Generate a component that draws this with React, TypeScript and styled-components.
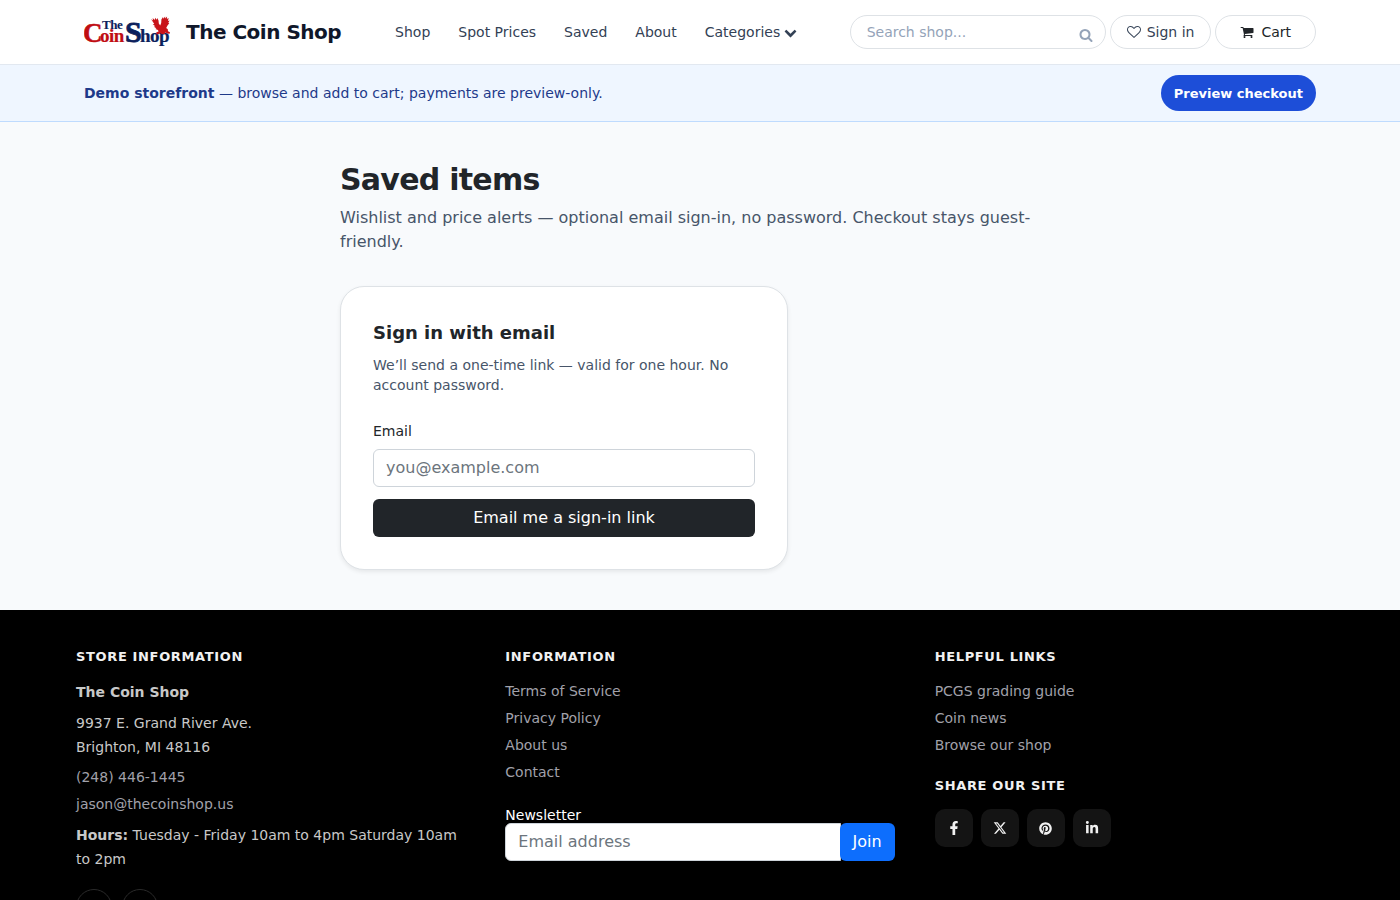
import React from 'react';
import styled, { createGlobalStyle } from 'styled-components';
import { FaFacebookF, FaLinkedinIn, FaPinterest } from 'react-icons/fa';
import { FaXTwitter } from 'react-icons/fa6';

const Global = createGlobalStyle`
  *, *::before, *::after { box-sizing: border-box; }
  body {
    margin: 0;
    background: #f8fafc;
    color: #212529;
    font-family: "DejaVu Sans", sans-serif;
    font-size: 16px;
    line-height: 24px;
  }
  h1, h2, h3, p, ul { margin: 0; padding: 0; }
  ul { list-style: none; }
  a { color: inherit; text-decoration: none; }
  input, button { font-family: inherit; margin: 0; }
`;

const ICONS = {
  search: 'M1216 832q0-185-131.5-316.5t-316.5-131.5-316.5 131.5-131.5 316.5 131.5 316.5 316.5 131.5 316.5-131.5 131.5-316.5zm512 832q0 52-38 90t-90 38q-54 0-90-38l-343-342q-179 124-399 124-143 0-273.5-55.5t-225-150-150-225-55.5-273.5 55.5-273.5 150-225 225-150 273.5-55.5 273.5 55.5 225 150 150 225 55.5 273.5q0 220-124 399l343 343q37 37 37 90z',
  cart: 'M704 1536q0 52-38 90t-90 38-90-38-38-90 38-90 90-38 90 38 38 90zm896 0q0 52-38 90t-90 38-90-38-38-90 38-90 90-38 90 38 38 90zm128-1088v512q0 24-16.5 42.5t-40.5 21.5l-1044 122q13 60 13 70 0 16-24 64h920q26 0 45 19t19 45-19 45-45 19h-1024q-26 0-45-19t-19-45q0-11 8-31.5t16-36 21.5-40 15.5-29.5l-177-823h-204q-26 0-45-19t-19-45 19-45 45-19h256q16 0 28.5 6.5t19.5 15.5 13 24.5 8 26 5.5 29.5 4.5 26h1201q26 0 45 19t19 45z',
  heart: 'M1664 596q0-81-21.5-143t-55-98.5-81.5-59.5-94-31-98-8-112 25.5-110.5 64-86.5 72-60 61.5q-18 22-49 22t-49-22q-24-28-60-61.5t-86.5-72-110.5-64-112-25.5-98 8-94 31-81.5 59.5-55 98.5-21.5 143q0 168 187 355l581 560 580-559q188-188 188-356zm128 0q0 221-229 450l-623 600q-18 18-44 18t-44-18l-624-602q-10-8-27.5-26t-55.5-65.5-68-97.5-53.5-121-23.5-138q0-220 127-344t351-124q62 0 126.5 21.5t120 58 95.5 68.5 76 68q36-36 76-68t95.5-68.5 120-58 126.5-21.5q224 0 351 124t127 344z',
  chevron: 'M1683 808l-742 741q-19 19-45 19t-45-19l-742-741q-19-19-19-45.5t19-45.5l166-165q19-19 45-19t45 19l531 531 531-531q19-19 45-19t45 19l166 165q19 19 19 45.5t-19 45.5z',
};

function Icon({ name, size = 14 }: { name: keyof typeof ICONS; size?: number }) {
  return (
    <svg width={size} height={size} viewBox="0 0 1792 1792" fill="currentColor" aria-hidden="true">
      <path d={ICONS[name]} />
    </svg>
  );
}

function Logo() {
  return (
    <svg width="88" height="36" viewBox="0 0 88 36" fontFamily="'Liberation Serif', serif" aria-hidden="true">
      <g fill="#c00d12" stroke="#c00d12" strokeWidth="0.2">
        <text x="-1" y="28" fontSize="27" strokeWidth="0.5">C</text>
        <text x="16" y="28" fontSize="19">oin</text>
      </g>
      <g fill="#0c1f5c" stroke="#0c1f5c" strokeWidth="0.1">
        <text x="18" y="15" fontSize="13">The</text>
        <text x="41" y="28" fontSize="30" strokeWidth="0.8">S</text>
        <text x="56" y="28" fontSize="19" strokeWidth="0.2">hop</text>
      </g>
      <path
        fill="#c8141a"
        d="M67 5l2 1.500-.3-2.500 2 2 .5-2.300 1.400 2 .7-1.700 1.200 2.500.3 3 1.400 2 1-2.500.2-3.500 1.600-2.500.4 1.800 1.700-2.300.2 2 1.800-2-.2 2.600 1.800-1-.8 2.800 1.600-.4-1.200 2.400 1 .3-1.800 2.400-1.300 2.500 1.600 1.200.2 2 2 1-.4 1.500-2.600-.2-1.400-1-1.600 1.600-2.400-.2-1.800-1-1.400 1.200-2.200.3.600-1-1.200-.4 1.600-1.200 1.400-.4-.6-1.400-2.600-1.200 1-.7-2.600-1.500 1.500-.4-2.600-2 1.600-.2z"
      />
    </svg>
  );
}

const Header = styled.header`
  background: #fff;
  border-bottom: 1px solid #e2e8f0;
`;
const Container = styled.div`
  max-width: 1280px;
  margin: 0 auto;
  padding: 0 24px;
  display: flex;
  align-items: center;
`;
const HeaderRow = styled(Container)`
  height: 64px;
`;
const Brand = styled.a`
  display: flex;
  align-items: center;
  gap: 14px;
  font-size: 20px;
  font-weight: 700;
  line-height: 28px;
  letter-spacing: -0.5px;
  color: #0f172a;
  white-space: nowrap;
`;
const Nav = styled.nav`
  display: flex;
  align-items: center;
  gap: 28px;
  margin-left: 54px;
  font-size: 14px;
  line-height: 20px;
  color: #334155;
  white-space: nowrap;
`;
const MenuButton = styled.button`
  display: flex;
  align-items: center;
  gap: 4px;
  padding: 0;
  border: 0;
  background: none;
  color: inherit;
  font-size: 14px;
  line-height: 20px;
`;
const Actions = styled.div`
  display: flex;
  align-items: center;
  gap: 4px;
  margin-left: auto;
`;
const SearchBox = styled.form`
  display: flex;
  align-items: center;
  width: 256px;
  height: 34px;
  padding: 0 12px 0 16px;
  border: 1px solid #dee2e6;
  border-radius: 17px;
`;
const SearchInput = styled.input`
  flex: 1;
  min-width: 0;
  padding: 0;
  border: 0;
  outline: 0;
  background: none;
  font-size: 14px;
  line-height: 20px;
  color: #334155;
  &::placeholder { color: #94a3b8; opacity: 1; }
`;
const SearchButton = styled.button`
  display: flex;
  padding: 6px 0 0;
  border: 0;
  background: none;
  color: #94a3b8;
`;
const Pill = styled.a<{ $wide?: boolean }>`
  display: flex;
  align-items: center;
  gap: ${(p) => (p.$wide ? 7 : 6)}px;
  height: 34px;
  padding: 0 ${(p) => (p.$wide ? 24 : 16)}px;
  border: 1px solid #dee2e6;
  border-radius: 17px;
  font-size: 14px;
  line-height: 20px;
  white-space: nowrap;
  color: ${(p) => (p.$wide ? '#212529' : '#334155')};
`;

const Banner = styled.div`
  background: #eff6ff;
  border-bottom: 1px solid #bfdbfe;
`;
const BannerRow = styled(Container)`
  justify-content: space-between;
  padding-top: 10px;
  padding-bottom: 10px;
  font-size: 14px;
  line-height: 20px;
  color: #1e3a8a;
`;
const PreviewButton = styled.button`
  height: 36px;
  padding: 0 13px;
  border: 0;
  border-radius: 18px;
  background: #1d4ed8;
  color: #fff;
  font-size: 13px;
  font-weight: 700;
  white-space: nowrap;
`;

const Main = styled.main`
  max-width: 768px;
  margin: 0 auto;
  padding: 40px 24px;
`;
const Title = styled.h1`
  font-size: 30px;
  line-height: 36px;
  font-weight: 700;
  letter-spacing: -0.75px;
`;
const Lead = styled.p`
  margin-top: 8px;
  color: #475569;
`;
const Card = styled.section`
  max-width: 448px;
  margin-top: 32px;
  padding: 32px;
  background: #fff;
  border: 1px solid #dee2e6;
  border-radius: 24px;
  box-shadow: 0 2px 4px rgba(0, 0, 0, 0.075);
`;
const CardTitle = styled.h2`
  font-size: 18px;
  line-height: 28px;
  font-weight: 700;
`;
const CardText = styled.p`
  margin-top: 8px;
  font-size: 14px;
  line-height: 20px;
  color: #475569;
`;
const Form = styled.form`
  display: flex;
  flex-direction: column;
  margin-top: 24px;
`;
const Label = styled.label`
  margin-bottom: 6px;
  font-size: 14px;
  line-height: 24px;
`;
const TextInput = styled.input`
  height: 38px;
  min-width: 0;
  padding: 5px 12px 7px;
  border: 1px solid #ced4da;
  border-radius: 6px;
  background: #fff;
  font-size: 16px;
  line-height: 24px;
  color: #212529;
  &::placeholder { color: #6c757d; opacity: 1; }
`;
const SolidButton = styled.button<{ $primary?: boolean }>`
  height: 38px;
  padding: 0 13px 2px;
  border: 0;
  border-radius: 6px;
  background: ${(p) => (p.$primary ? '#0d6efd' : '#212529')};
  color: #fff;
  font-size: 16px;
`;
const SubmitButton = styled(SolidButton)`
  margin-top: 12px;
`;

const Footer = styled.footer`
  background: #000;
  color: #c8c8c8;
  font-size: 14px;
  line-height: 24px;
`;
const FooterGrid = styled.div`
  display: grid;
  grid-template-columns: repeat(3, minmax(0, 1fr));
  gap: 40px;
  max-width: 1280px;
  margin: 0 auto;
  padding: 36px 16px;
`;
const FooterHeading = styled.h3`
  margin-bottom: 12px;
  font-size: 13px;
  line-height: 22px;
  font-weight: 700;
  letter-spacing: 0.05em;
  text-transform: uppercase;
  color: #f1f1f1;
`;
const StoreLine = styled.p`
  margin-bottom: 7px;
`;
const LinkList = styled.ul`
  display: flex;
  flex-direction: column;
  gap: 4px;
  margin-bottom: 18px;
  line-height: 23px;
  color: #a1a1aa;
`;
const ContactList = styled(LinkList)`
  margin-bottom: 7px;
`;
const NewsletterLabel = styled.label`
  display: block;
  margin-top: 23px;
  font-size: 14px;
  line-height: 16px;
  color: #fff;
`;
const InputGroup = styled.form`
  display: flex;
`;
const NewsletterInput = styled(TextInput)`
  flex: 1;
  border-top-right-radius: 0;
  border-bottom-right-radius: 0;
`;
const JoinButton = styled(SolidButton)`
  margin-left: -1px;
`;
const ShareRow = styled.div`
  display: flex;
  gap: 8px;
`;
const ShareLink = styled.a`
  display: flex;
  align-items: center;
  justify-content: center;
  width: 38px;
  height: 38px;
  border-radius: 10px;
  background: #141414;
  color: #f1f1f1;
`;
const SocialRow = styled.div`
  display: flex;
  gap: 10px;
  margin-top: 18px;
`;
const SocialLink = styled.a`
  display: flex;
  align-items: center;
  justify-content: center;
  width: 36px;
  height: 36px;
  border: 1px solid #2a2a2a;
  border-radius: 50%;
`;

const NAV_LINKS = ['Shop', 'Spot Prices', 'Saved', 'About'];
const INFO_LINKS = ['Terms of Service', 'Privacy Policy', 'About us', 'Contact'];
const HELPFUL_LINKS = ['PCGS grading guide', 'Coin news', 'Browse our shop'];

export default function App() {
  return (
    <>
      <Global />
      <Header>
        <HeaderRow>
          <Brand href="#">
            <Logo />
            The Coin Shop
          </Brand>
          <Nav>
            {NAV_LINKS.map((label) => (
              <a key={label} href="#">{label}</a>
            ))}
            <MenuButton type="button">
              Categories
              <Icon name="chevron" size={13} />
            </MenuButton>
          </Nav>
          <Actions>
            <SearchBox>
              <SearchInput type="text" placeholder="Search shop..." aria-label="Search shop" />
              <SearchButton type="button" aria-label="Search">
                <Icon name="search" />
              </SearchButton>
            </SearchBox>
            <Pill href="#">
              <Icon name="heart" />
              Sign in
            </Pill>
            <Pill href="#" $wide>
              <Icon name="cart" />
              Cart
            </Pill>
          </Actions>
        </HeaderRow>
      </Header>
      <Banner>
        <BannerRow>
          <p>
            <strong>Demo storefront</strong> — browse and add to cart; payments are preview-only.
          </p>
          <PreviewButton type="button">Preview checkout</PreviewButton>
        </BannerRow>
      </Banner>
      <Main>
        <Title>Saved items</Title>
        <Lead>Wishlist and price alerts — optional email sign-in, no password. Checkout stays guest-friendly.</Lead>
        <Card>
          <CardTitle>Sign in with email</CardTitle>
          <CardText>We’ll send a one-time link — valid for one hour. No account password.</CardText>
          <Form>
            <Label htmlFor="email">Email</Label>
            <TextInput id="email" type="email" placeholder="you@example.com" />
            <SubmitButton type="button">Email me a sign-in link</SubmitButton>
          </Form>
        </Card>
      </Main>
      <Footer>
        <FooterGrid>
          <section>
            <FooterHeading>Store information</FooterHeading>
            <StoreLine><strong>The Coin Shop</strong></StoreLine>
            <StoreLine>9937 E. Grand River Ave.<br />Brighton, MI 48116</StoreLine>
            <ContactList>
              <li><a href="#">(248) 446-1445</a></li>
              <li><a href="#">jason@thecoinshop.us</a></li>
            </ContactList>
            <p><strong>Hours:</strong> Tuesday - Friday 10am to 4pm Saturday 10am to 2pm</p>
            <SocialRow>
              <SocialLink href="#" aria-label="Facebook"><FaFacebookF size={14} /></SocialLink>
              <SocialLink href="#" aria-label="LinkedIn"><FaLinkedinIn size={14} /></SocialLink>
            </SocialRow>
          </section>
          <section>
            <FooterHeading>Information</FooterHeading>
            <LinkList>
              {INFO_LINKS.map((label) => (
                <li key={label}><a href="#">{label}</a></li>
              ))}
            </LinkList>
            <NewsletterLabel htmlFor="newsletter">Newsletter</NewsletterLabel>
            <InputGroup>
              <NewsletterInput id="newsletter" type="email" placeholder="Email address" />
              <JoinButton type="button" $primary>Join</JoinButton>
            </InputGroup>
          </section>
          <section>
            <FooterHeading>Helpful links</FooterHeading>
            <LinkList>
              {HELPFUL_LINKS.map((label) => (
                <li key={label}><a href="#">{label}</a></li>
              ))}
            </LinkList>
            <FooterHeading>Share our site</FooterHeading>
            <ShareRow>
              <ShareLink href="#" aria-label="Facebook"><FaFacebookF size={14} /></ShareLink>
              <ShareLink href="#" aria-label="X"><FaXTwitter size={14} /></ShareLink>
              <ShareLink href="#" aria-label="Pinterest"><FaPinterest size={13} /></ShareLink>
              <ShareLink href="#" aria-label="LinkedIn"><FaLinkedinIn size={14} /></ShareLink>
            </ShareRow>
          </section>
        </FooterGrid>
      </Footer>
    </>
  );
}
